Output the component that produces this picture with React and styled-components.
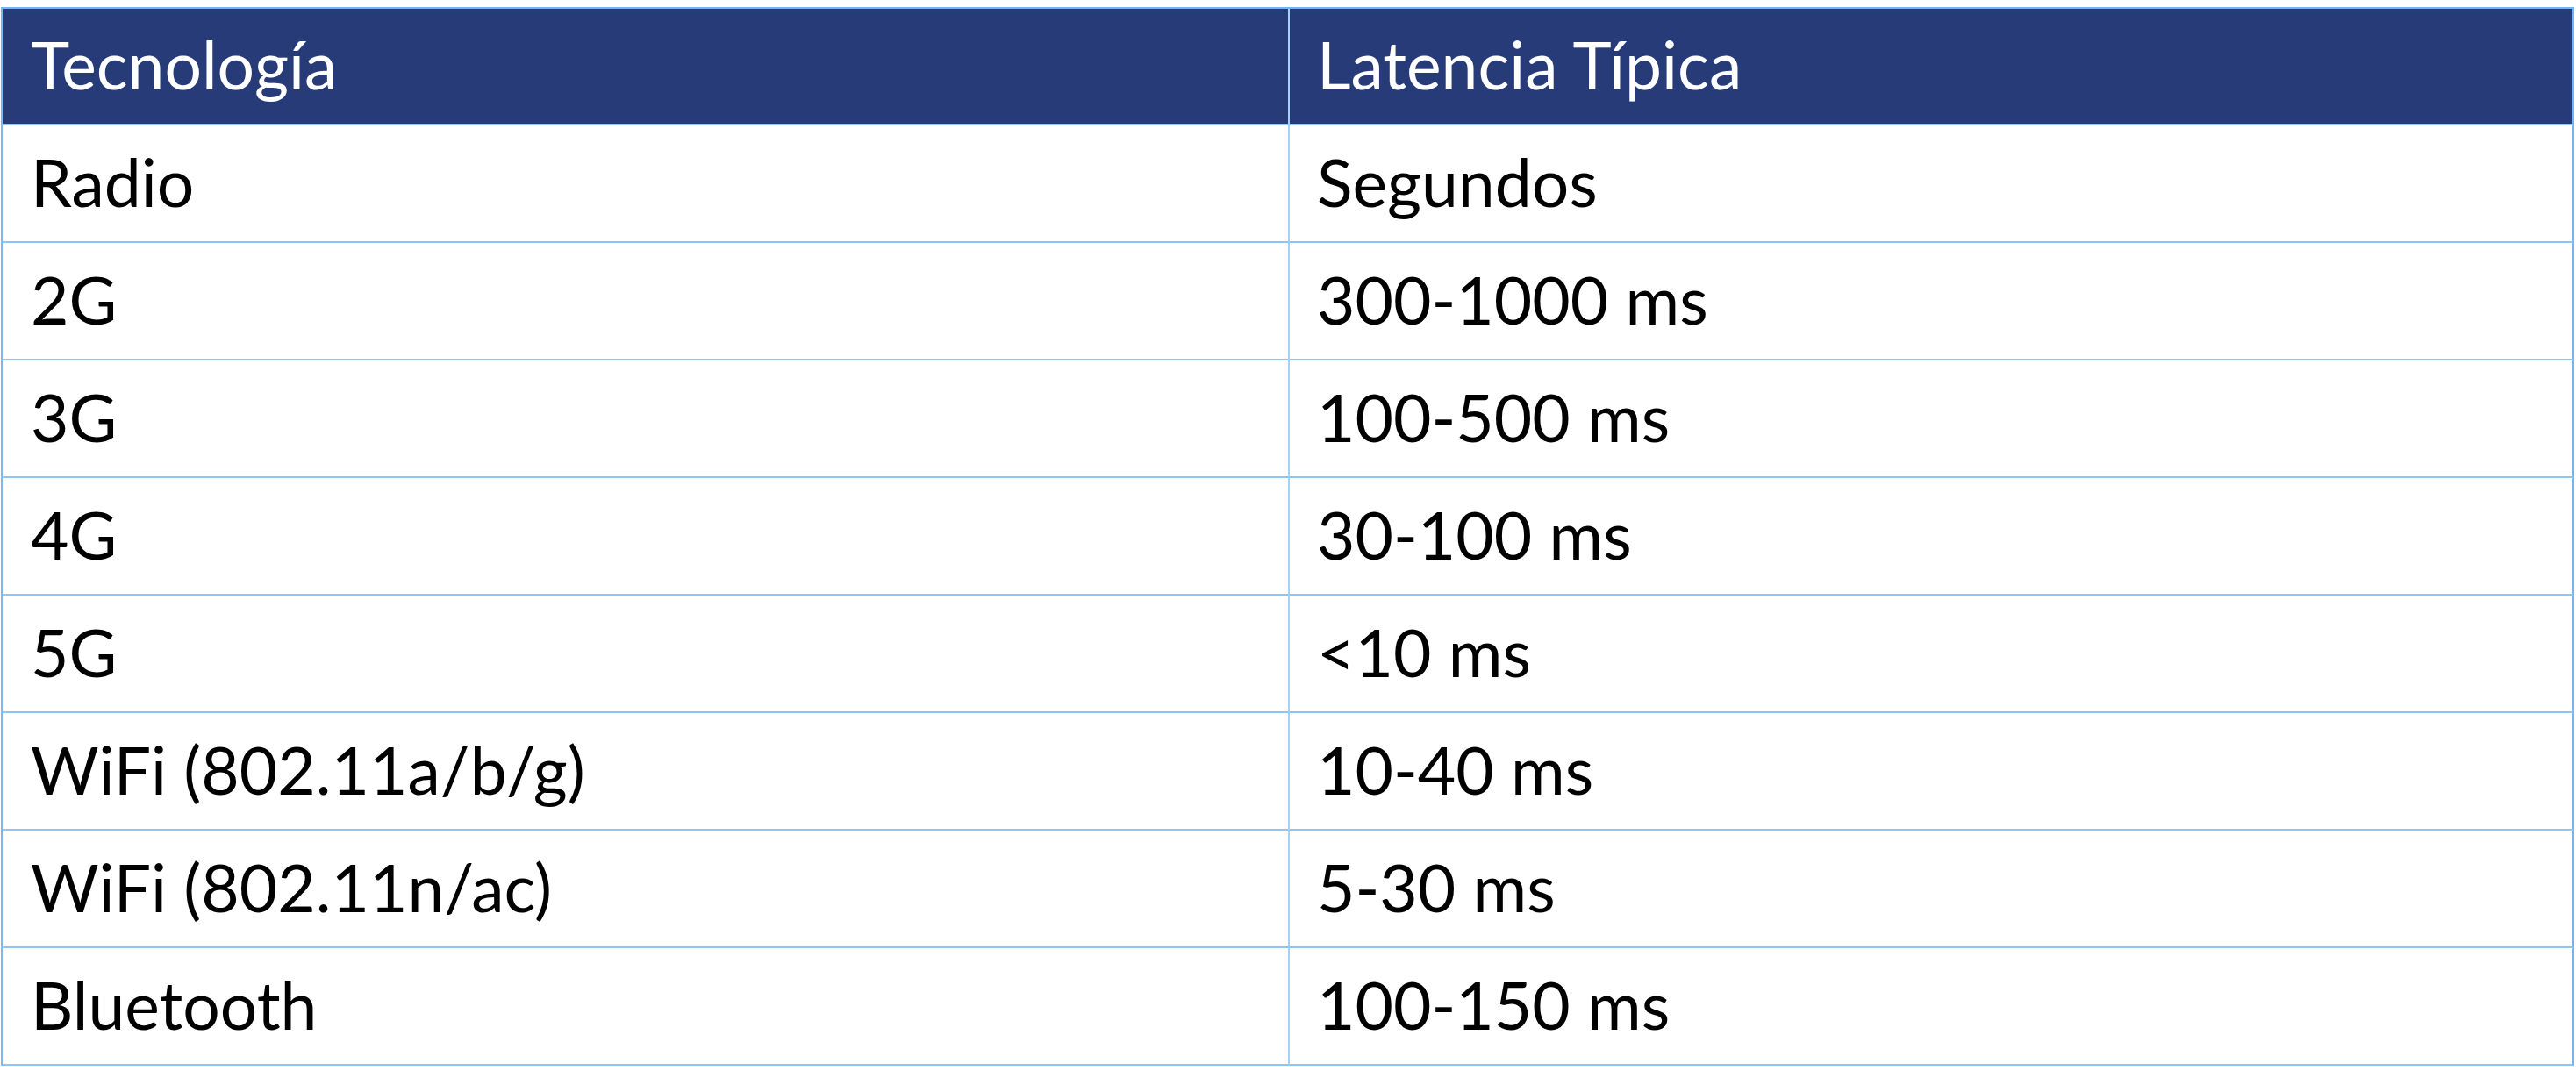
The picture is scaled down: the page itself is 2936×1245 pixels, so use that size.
import React from "react";
import styled, { createGlobalStyle } from "styled-components";

const GlobalStyle = createGlobalStyle`
  html, body {
    margin: 0;
    padding: 0;
    background: #ffffff;
  }
  body {
    font-family: Lato, "Open Sans", "Liberation Sans", sans-serif;
  }
`;

//whole table, 2 equal columns
const Table = styled.div`
  margin: 8px 0 0 1px;
  width: 2933px;
  display: grid;
  grid-template-columns: 1467px 1fr;
  border-top: 2px solid #6fb5f7;
  border-left: 2px solid #7ab9f5;
  box-sizing: border-box;
`;

const Cell = styled.div`
  height: ${(p) => (p.$head ? "133px" : "134px")};
  box-sizing: border-box;
  display: flex;
  align-items: center;
  padding-left: ${(p) => (p.$second ? "31px" : "32px")};
  padding-bottom: 4px;
  font-size: 75px;
  line-height: 1;
  color: ${(p) => (p.$head ? "#ffffff" : "#000000")};
  background: ${(p) => (p.$head ? "#263b78" : "#ffffff")};
  border-bottom: 2px solid #8ec4f6;
  border-right: 2px solid ${(p) => (p.$second ? "#6fb5f7" : "#a6d0f7")};
  white-space: nowrap;
`;

const rows = [
  ["Radio", "Segundos"],
  ["2G", "300-1000 ms"],
  ["3G", "100-500 ms"],
  ["4G", "30-100 ms"],
  ["5G", "<10 ms"],
  ["WiFi (802.11a/b/g)", "10-40 ms"],
  ["WiFi (802.11n/ac)", "5-30 ms"],
  ["Bluetooth", "100-150 ms"],
];

const App = () => {
  return (
    <>
      <GlobalStyle />
      <Table>
        <Cell $head>Tecnología</Cell>
        <Cell $head $second>
          Latencia Típica
        </Cell>
        {rows.map(([tech, lat]) => (
          <React.Fragment key={tech}>
            <Cell>{tech}</Cell>
            <Cell $second>{lat}</Cell>
          </React.Fragment>
        ))}
      </Table>
    </>
  );
};

export default App;
